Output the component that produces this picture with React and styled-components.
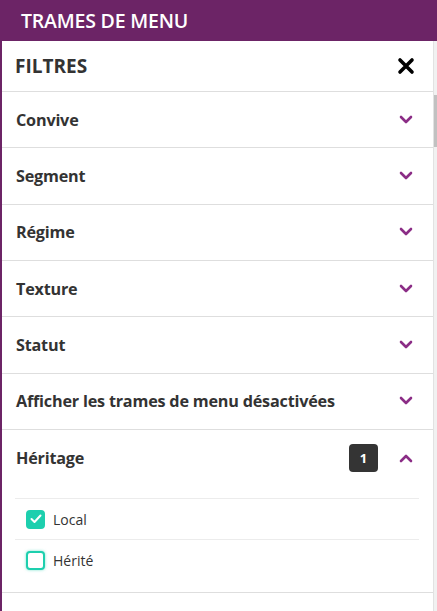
import React, { useState } from "react";
import styled, { createGlobalStyle } from "styled-components";

const GlobalStyle = createGlobalStyle`
  html, body {
    margin: 0;
    padding: 0;
    height: 100%;
    background: #6c2466;
    font-family: "Open Sans", "Noto Sans", sans-serif;
    color: #333;
    overflow: hidden;
  }
`;

const Page = styled.div`
  height: 611px;
  display: flex;
  flex-direction: column;
`;

const TopBar = styled.header`
  height: 41px;
  flex-shrink: 0;
  display: flex;
  align-items: center;
  padding: 0 21px;
  color: #fff;
  font-size: 19.5px;
  font-weight: 600;
  letter-spacing: -0.2px;
`;

const Drawer = styled.aside`
  flex: 1;
  margin-left: 2px;
  background: #fff;
  display: flex;
  min-height: 0;
`;

const Body = styled.div`
  flex: 1;
  display: flex;
  flex-direction: column;
`;

const Scrollbar = styled.div`
  width: 3px;
  background: #f1f1f1;
  border-left: 1px solid #e2e2e2;
  padding-top: 54px;
`;

const Thumb = styled.div`
  height: 52px;
  background: #c1c1c1;
`;

const DrawerHead = styled.div`
  height: 50px;
  display: flex;
  align-items: center;
  justify-content: space-between;
  padding: 0 18px 0 13px;
  border-bottom: 1px solid #dedede;
`;

const DrawerTitle = styled.h2`
  margin: 0;
  font-size: 19px;
  font-weight: 700;
  color: #333;
`;

const CloseButton = styled.button`
  border: 0;
  background: none;
  padding: 0;
  display: flex;
  cursor: pointer;
`;

const Section = styled.section`
  border-bottom: 1px solid #dedede;
`;

const SectionHead = styled.div`
  height: 55.33px;
  display: flex;
  align-items: center;
  padding: 0 20px 0 14px;
  gap: 10px;
  cursor: pointer;
`;

const SectionLabel = styled.span`
  flex: 1;
  font-size: 16.2px;
  font-weight: 700;
  color: #333;
  letter-spacing: -0.2px;
`;

const Badge = styled.span`
  width: 29px;
  height: 28px;
  border-radius: 4px;
  background: #343434;
  color: #fff;
  font-size: 13px;
  font-weight: 700;
  display: flex;
  align-items: center;
  justify-content: center;
  margin-right: 11px;
`;

const Options = styled.ul`
  list-style: none;
  margin: 0 14px 0 13px;
  padding: 13px 0 12px;
`;

const Option = styled.li`
  height: 40px;
  display: flex;
  align-items: center;
  gap: 8px;
  padding-left: 11px;
  border-top: 1px solid #ececec;
  font-size: 14px;
  color: #333;
`;

const Box = styled.span`
  width: 19px;
  height: 19px;
  box-sizing: border-box;
  border-radius: 4px;
  display: flex;
  align-items: center;
  justify-content: center;
  background: ${(p) => (p.$checked ? "#1dcfae" : "#fff")};
  border: 2px solid #1dcfae;
  box-shadow: ${(p) => (p.$checked ? "none" : "0 0 3px rgba(29, 207, 174, 0.6)")};
`;

const Chevron = ({ up }) => (
  <svg width="14" height="10" viewBox="0 0 14 10">
    <path
      d={up ? "M2 8 L7 3 L12 8" : "M2 2 L7 7 L12 2"}
      fill="none"
      stroke="#8b2d86"
      strokeWidth="2.6"
      strokeLinecap="round"
      strokeLinejoin="round"
    />
  </svg>
);

const filters = [
  "Convive",
  "Segment",
  "Régime",
  "Texture",
  "Statut",
  "Afficher les trames de menu désactivées",
];

const App = () => {
  const [origins, setOrigins] = useState({ Local: true, "Hérité": false });
  const count = Object.values(origins).filter(Boolean).length;

  return (
    <>
      <GlobalStyle />
      <Page>
        <TopBar>TRAMES DE MENU</TopBar>
        <Drawer>
          <Body>
            <DrawerHead>
              <DrawerTitle>FILTRES</DrawerTitle>
              <CloseButton aria-label="Fermer">
                <svg width="18" height="18" viewBox="0 0 18 18">
                  <path
                    d="M3 3 L15 15 M15 3 L3 15"
                    stroke="#000"
                    strokeWidth="3.6"
                    strokeLinecap="round"
                  />
                </svg>
              </CloseButton>
            </DrawerHead>
            {filters.map((label) => (
              <Section key={label}>
                <SectionHead>
                  <SectionLabel>{label}</SectionLabel>
                  <Chevron />
                </SectionHead>
              </Section>
            ))}
            <Section>
              <SectionHead>
                <SectionLabel>Héritage</SectionLabel>
                <Badge>{count}</Badge>
                <Chevron up />
              </SectionHead>
              <Options>
                {Object.keys(origins).map((name) => (
                  <Option
                    key={name}
                    onClick={() => setOrigins((o) => ({ ...o, [name]: !o[name] }))}
                  >
                    <Box $checked={origins[name]}>
                      {origins[name] && (
                        <svg width="12" height="10" viewBox="0 0 12 10">
                          <path
                            d="M1.5 5 L4.5 8 L10.5 1.5"
                            fill="none"
                            stroke="#fff"
                            strokeWidth="2"
                            strokeLinecap="round"
                            strokeLinejoin="round"
                          />
                        </svg>
                      )}
                    </Box>
                    {name}
                  </Option>
                ))}
              </Options>
            </Section>
          </Body>
          <Scrollbar>
            <Thumb />
          </Scrollbar>
        </Drawer>
      </Page>
    </>
  );
};

export default App;
